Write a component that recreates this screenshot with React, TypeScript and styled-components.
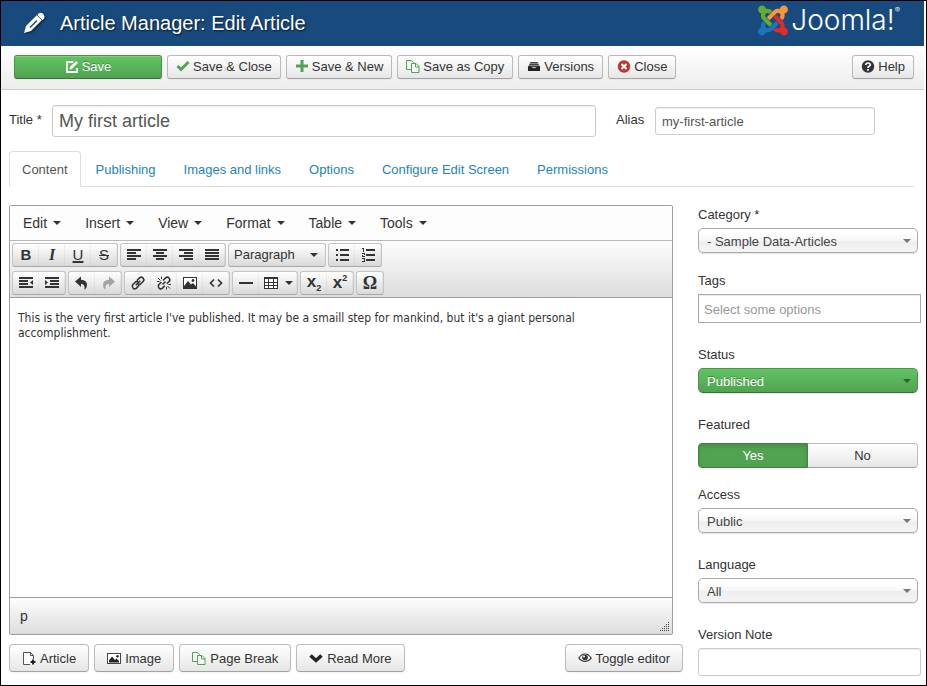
import React, { useState } from "react";
import styled, { createGlobalStyle, css } from "styled-components";

const Global = createGlobalStyle`
  *, *::before, *::after { box-sizing: border-box; }
  body { margin: 0; background: #fff; }
  body, button, input, select {
    font-family: "Liberation Sans", Arial, sans-serif;
    font-size: 13px;
    line-height: 18px;
    color: #333;
  }
`;

const GREEN = "#51a351";

const Page = styled.div`
  min-height: 100vh;
  border: 1px solid #000;
  padding-right: 2px;
  display: flex;
  flex-direction: column;
`;

const Header = styled.header`
  display: flex;
  align-items: center;
  height: 45px;
  padding: 0 24px 2px 22px;
  background: #184a7d;
  color: #fff;
`;

const PageTitle = styled.h1`
  flex: 1;
  margin: 0 0 0 15px;
  font-size: 20px;
  line-height: 24px;
  font-weight: 400;
  text-shadow: 1px 1px 2px rgba(0, 0, 0, 0.7);
`;

const HeaderIcon = styled.svg`
  width: 22px;
  height: 22px;
  filter: drop-shadow(1px 1px 1px rgba(0, 0, 0, 0.6));
`;

const Logo = styled.a`
  display: flex;
  align-items: center;
  gap: 3px;
  padding-bottom: 5px;
  color: #fff;
  text-decoration: none;
`;

const LogoWord = styled.span`
  display: flex;
  align-items: flex-start;
  font-family: Inter, "Liberation Sans", sans-serif;
  font-size: 28px;
  font-weight: 300;
  line-height: 30px;
`;

const Registered = styled.sup`
  font-size: 8px;
  line-height: 10px;
`;

const ActionBar = styled.div`
  display: flex;
  gap: 5px;
  padding: 9px 10px 10px 13px;
  border-bottom: 1px solid #ccc;
  background: linear-gradient(#fff, #ededed);
`;

const Spacer = styled.span`
  flex: 1;
`;

const Button = styled.button<{ $primary?: boolean; $tall?: boolean }>`
  display: inline-flex;
  align-items: center;
  justify-content: center;
  gap: ${(p) => (p.$tall ? 4 : 3)}px;
  height: ${(p) => (p.$tall ? 28 : 24)}px;
  padding: ${(p) => (p.$tall ? "2px 12px 0" : "0 8px")};
  border: 1px solid #bbb;
  border-bottom-color: #a2a2a2;
  border-radius: ${(p) => (p.$tall ? 4 : 3)}px;
  background: linear-gradient(#fff, #e6e6e6);
  box-shadow: inset 0 1px 0 rgba(255, 255, 255, 0.2), 0 1px 2px rgba(0, 0, 0, 0.05);
  white-space: nowrap;
  cursor: pointer;
  ${(p) =>
    p.$primary &&
    css`
      min-width: 148px;
      border-color: #499249 #499249 #387038;
      background: linear-gradient(#62c462, #51a351);
      color: #fff;
      text-shadow: 0 -1px 0 rgba(0, 0, 0, 0.25);
    `}
`;

const Glyph = styled.svg`
  flex: none;
  width: 14px;
  height: 14px;
`;

const TitleRow = styled.div`
  display: flex;
  align-items: center;
  padding: 15px 49px 0 8px;
`;

const FieldLabel = styled.label<{ $width?: number }>`
  display: block;
  min-width: ${(p) => (p.$width ? `${p.$width}px` : "0")};
  padding-bottom: ${(p) => (p.$width ? 3 : 0)}px;
  line-height: 20px;
`;

const TextInput = styled.input<{ $large?: boolean; $square?: boolean }>`
  display: block;
  width: 100%;
  height: ${(p) => (p.$large ? 32 : p.$square ? 29 : 28)}px;
  padding: ${(p) => (p.$square ? "2px 5px 0" : "0 6px")};
  border: 1px solid ${(p) => (p.$square ? "#aaa" : "#ccc")};
  border-radius: ${(p) => (p.$square ? 0 : 3)}px;
  background: #fff;
  box-shadow: inset 0 1px 1px rgba(0, 0, 0, 0.075);
  color: #555;
  font-size: ${(p) => (p.$large ? 18 : 13)}px;
  &::placeholder { color: #999; opacity: 1; }
`;

const TitleBox = styled.div`
  flex: 1;
  margin-right: 20px;
`;

const AliasBox = styled.div`
  flex: 0 0 220px;
`;

const Tabs = styled.nav`
  display: flex;
  gap: 2px;
  margin: 14px 10px 0 8px;
  border-bottom: 1px solid #ddd;
`;

const Tab = styled.a<{ $active?: boolean }>`
  height: 36px;
  margin-bottom: -1px;
  padding: 9px 12px 0;
  border: 1px solid transparent;
  border-radius: 4px 4px 0 0;
  color: #2384bd;
  text-decoration: none;
  ${(p) =>
    p.$active &&
    css`
      border-color: #ddd #ddd #fff;
      background: #fff;
      color: #555;
    `}
`;

const Columns = styled.div`
  display: grid;
  grid-template-columns: minmax(0, 1fr) 223px;
  gap: 15px;
  padding: 18px 3px 9px 8px;
`;

const Main = styled.main`
  display: flex;
  flex-direction: column;
  gap: 9px;
`;

const Editor = styled.section`
  display: flex;
  flex-direction: column;
  margin-right: 10px;
  border: 1px solid #9e9e9e;
  border-radius: 2px;
`;

const MenuBar = styled.div`
  display: flex;
  height: 35px;
  padding-left: 1px;
  border-bottom: 1px solid #b9b9b9;
  background: #fdfdfd;
`;

const MenuButton = styled.button`
  display: flex;
  align-items: center;
  gap: 6px;
  padding: 0 12px;
  border: 0;
  background: none;
  font-size: 14px;
`;

const Caret = styled.span<{ $color?: string }>`
  flex: none;
  border: 4px solid transparent;
  border-top-color: ${(p) => p.$color || "#333"};
  border-bottom: 0;
`;

const Tools = styled.div`
  display: flex;
  flex-direction: column;
  gap: 4px;
  padding: 2px;
  border-bottom: 1px solid #9e9e9e;
  background: linear-gradient(#fdfdfd, #ddd);
`;

const ToolRow = styled.div`
  display: flex;
  gap: 2px;
`;

const ToolGroup = styled.div`
  display: flex;
  height: 24px;
  border: 1px solid #c4c4c4;
  border-bottom-color: #a8a8a8;
  border-radius: 3px;
  background: linear-gradient(#fff, #d9d9d9);
  overflow: hidden;
`;

const ToolButton = styled.button<{ $wide?: boolean }>`
  display: flex;
  align-items: center;
  justify-content: center;
  gap: 6px;
  width: ${(p) => (p.$wide ? 38 : 26)}px;
  padding: 0;
  border: 0;
  background: none;
  box-shadow: inset -1px 0 0 rgba(0, 0, 0, 0.04);
`;

const ToolGlyph = styled.svg`
  flex: none;
  width: 16px;
  height: 16px;
`;

type LetterKind = "b" | "i" | "u" | "s" | "x" | "o";

const letterStyles: Record<LetterKind, ReturnType<typeof css>> = {
  b: css`font-weight: 700;`,
  i: css`font: italic 700 16px/18px "Liberation Serif", serif;`,
  u: css`text-decoration: underline; text-decoration-thickness: 2px; text-underline-offset: 1px;`,
  s: css`padding: 0 1px; text-decoration: line-through;`,
  x: css`font-size: 17px; font-weight: 700;`,
  o: css`font: 700 18px/18px "Liberation Serif", serif;`,
};

const Letter = styled.span<{ $kind: LetterKind }>`
  font-size: 15px;
  line-height: 18px;
  ${(p) => letterStyles[p.$kind]}
  sub, sup { font-size: 9px; line-height: 8px; }
`;

const Overlay = styled.div<{ $width?: number }>`
  display: grid;
  align-items: center;
  width: ${(p) => (p.$width ? `${p.$width}px` : "auto")};
  margin-right: ${(p) => (p.$width ? 0 : 3)}px;
  & > * { grid-area: 1 / 1; }
  & > span { justify-self: end; margin-right: 7px; pointer-events: none; }
`;

const FormatSelect = styled.select`
  width: 100%;
  height: 22px;
  padding: 0 5px;
  border: 0;
  appearance: none;
  background: none;
`;

const Canvas = styled.div`
  min-height: 299px;
  padding: 13px 8px;
  outline: 0;
  font-family: "DejaVu Sans Condensed", "DejaVu Sans", sans-serif;
  font-size: 12px;
  line-height: 15px;
`;

const Paragraph = styled.p`
  margin: 0;
`;

const StatusBar = styled.div`
  display: flex;
  align-items: center;
  justify-content: space-between;
  height: 37px;
  padding: 0 2px 0 10px;
  border-top: 1px solid #9e9e9e;
  background: linear-gradient(#fdfdfd, #ddd);
  font-size: 14px;
`;

const Grip = styled.svg`
  align-self: flex-end;
  width: 10px;
  height: 10px;
  margin-bottom: 2px;
`;

const ButtonRow = styled.div`
  display: flex;
  gap: 5px;
`;

const Side = styled.aside`
  display: flex;
  flex-direction: column;
`;

const Field = styled.div<{ $after: number; $gap?: number }>`
  display: flex;
  flex-direction: column;
  gap: ${(p) => p.$gap || 3}px;
  margin-bottom: ${(p) => p.$after}px;
`;

const Select = styled.select<{ $green?: boolean }>`
  width: 100%;
  height: 25px;
  padding: 2px 8px 0;
  border: 1px solid #aaa;
  border-radius: 5px;
  appearance: none;
  background: linear-gradient(#fff 20%, #f6f6f6 50%, #eee 52%, #f4f4f4 100%);
  box-shadow: 0 1px 1px rgba(0, 0, 0, 0.1);
  color: #444;
  ${(p) =>
    p.$green &&
    css`
      border-color: #499249 #499249 #387038;
      background: linear-gradient(#62c462, #51a351);
      color: #fff;
      text-shadow: 0 -1px 0 rgba(0, 0, 0, 0.25);
    `}
`;

const Toggle = styled.div`
  display: grid;
  grid-template-columns: 1fr 1fr;
  margin-right: 3px;
`;

const ToggleOption = styled.label<{ $on: boolean; $last?: boolean }>`
  display: flex;
  align-items: center;
  justify-content: center;
  height: 25px;
  border: 1px solid #bbb;
  border-bottom-color: #a2a2a2;
  border-left-width: ${(p) => (p.$last ? 0 : 1)}px;
  border-radius: ${(p) => (p.$last ? "0 4px 4px 0" : "4px 0 0 4px")};
  background: linear-gradient(#fff, #e6e6e6);
  ${(p) =>
    p.$on &&
    css`
      border-color: #3f853f;
      background: ${GREEN};
      box-shadow: inset 0 2px 4px rgba(0, 0, 0, 0.15);
      color: #fff;
    `}
`;

const HiddenRadio = styled.input`
  appearance: none;
  width: 0;
  height: 0;
  margin: 0;
`;

const JoomlaMark = () => (
  <svg width="30" height="31" viewBox="0 24 448 464" aria-hidden="true">
    <path fill="#63ab35" d="M.6 92.1C.6 58.8 27.4 32 60.4 32c30 0 54.5 21.9 59.2 50.2 32.6-7.6 67.1.6 96.5 30l-44.3 44.3c-20.5-20.5-42.6-16.3-55.4-3.5-14.3 14.3-14.3 37.9 0 52.2l99.5 99.5-44 44.3c-87.7-87.2-49.7-49.7-99.8-99.7-26.8-26.5-35-64.8-24.8-98.9C20.4 144.6.6 120.7.6 92.1z" />
    <path fill="#f8963b" d="M130.1 208.5l44.3 44.3c10-10 89.7-89.7 99.7-99.8 14.3-14.3 37.6-14.3 51.9 0 12.8 12.8 17 35-3.5 55.4l44 44.3c31.2-31.2 38.5-67.6 28.9-101.2 29.2-4.1 51.9-29.2 51.9-59.5 0-33.2-26.8-60.1-59.8-60.1-30.3 0-55.4 22.5-59.5 51.6-33.8-9.9-71.7-1.5-98.3 25.1-18.3 19.1-71.1 71.5-99.6 99.9z" />
    <path fill="#e02a2b" d="M396.4 360.7c8.2-32.7-.9-68.5-26.3-93.9-11.8-12.2 5 4.7-99.5-99.7l-44.3 44.3 99.7 99.7c14.3 14.3 14.3 37.6 0 51.9-12.8 12.8-35 17-55.4-3.5l-44 44.3c27.6 30.2 68 38.8 102.7 28 5.5 27.4 29.7 48.1 58.9 48.1 33 0 59.8-26.8 59.8-60.1 0-30.2-22.5-55-51.6-59.1z" />
    <path fill="#1d75b9" d="M312.1 307.6l-44-44.3c-87 86.4-50.4 50.4-99.7 99.8-14.3 14.3-37.6 14.3-51.9 0-13.1-13.4-16.9-35.3 3.2-55.4l-44-44.3c-30.2 30.2-38 65.2-29.5 98.3-26.7 6-46.2 29.9-46.2 58.2C0 453.2 26.8 480 59.8 480c28.6 0 52.5-19.8 58.6-46.7 32.7 8.2 68.5-.6 94.2-26 32.1-32.2 12.2-12.2 99.5-99.7z" />
  </svg>
);

const PagesGlyph = () => (
  <Glyph viewBox="0 0 14 14" fill="#f7fbf7" stroke={GREEN}>
    <path d="M0.500 0.500h5l2 2v7h-7z" />
    <path d="M5.500 3.500h4.500l3 3v6h-7.500z" />
    <path d="M9.500 3.500v3.500h3.500" fill="none" />
  </Glyph>
);

const ImageGlyph = () => (
  <Glyph viewBox="0 0 14 14">
    <rect x="0.500" y="1.500" width="13" height="10" fill="#fff" stroke="#444" />
    <path fill="#222" d="M2 10.500V8.500l3-4 3 3.500 1.500-1.500 2.500 2.500v1.500z" />
    <circle cx="10.500" cy="4.200" r="1.200" fill="#222" />
  </Glyph>
);

const lines = (rows: [number, number][]) => (
  <ToolGlyph viewBox="0 0 16 16" shapeRendering="crispEdges">
    {rows.map(([x, w], i) => (
      <rect key={i} x={x} y={2 + i * 3} width={w} height={2} fill="#333" />
    ))}
  </ToolGlyph>
);

const indent = (arrow: string) => (
  <ToolGlyph viewBox="0 0 16 16" fill="#333">
    <path d={`M1 2h14v2H1zM1 11h14v2H1z${arrow}`} />
  </ToolGlyph>
);

const menus = ["Edit", "Insert", "View", "Format", "Table", "Tools"];
const tabs = ["Content", "Publishing", "Images and links", "Options", "Configure Edit Screen", "Permissions"];

type PickerProps = { id: string; label: string; value: string; green?: boolean; after: number };

const Picker = ({ id, label, value, green, after }: PickerProps) => (
  <Field $after={after}>
    <FieldLabel htmlFor={id}>{label}</FieldLabel>
    <Overlay>
      <Select id={id} $green={green}>
        <option>{value}</option>
      </Select>
      <Caret $color={green ? "#2c602c" : "#777"} />
    </Overlay>
  </Field>
);

export default function App() {
  const [featured, setFeatured] = useState(true);

  return (
    <Page>
      <Global />
      <Header>
        <HeaderIcon viewBox="0 0 22 22">
          <path fill="#fff" d="M1 21l2-7L14 3l5 5L8 19z" />
          <path fill="#fff" d="M15 2q2.500-2.500 5-.3t1 5l-1.500 1.500-5-5z" />
          <path stroke="#184a7d" strokeWidth="1.400" d="M7 15.500l7-7" />
          <path stroke="#184a7d" strokeWidth="0.700" d="M14 3l5 5" />
        </HeaderIcon>
        <PageTitle>Article Manager: Edit Article</PageTitle>
        <Logo href="#" aria-label="Joomla!">
          <JoomlaMark />
          <LogoWord>
            Joomla!<Registered>®</Registered>
          </LogoWord>
        </Logo>
      </Header>

      <ActionBar>
        <Button $primary>
          <Glyph viewBox="0 0 14 14" fill="none" stroke="#fff" strokeWidth="1.800">
            <path d="M8 2H2v10h10V8" />
            <path d="M4.500 9.500l.5-2.700L11.200 1l1.800 1.800L7 9z" fill="#fff" stroke="none" />
          </Glyph>
          Save
        </Button>
        <Button>
          <Glyph viewBox="0 0 14 14" fill="none" stroke={GREEN} strokeWidth="2.800">
            <path d="M1.500 6L5 9.500l7.500-7.500" />
          </Glyph>
          Save &amp; Close
        </Button>
        <Button>
          <Glyph viewBox="0 0 14 14" fill={GREEN}>
            <path d="M5.500 0h3v4.500H13v3H8.500V12h-3V7.500H1v-3h4.500z" />
          </Glyph>
          Save &amp; New
        </Button>
        <Button>
          <PagesGlyph />
          Save as Copy
        </Button>
        <Button>
          <Glyph viewBox="0 0 14 14">
            <path fill="#888" d="M3.500 2h7L13.500 7.500H.5z" />
            <path stroke="#444" d="M3.500 2.500h7M2.500 4.500h9M1.500 6.500h11" />
            <path fill="#222" d="M1 6.500h3q.8 1.800 3 1.800t3-1.800h3V11H1z" />
          </Glyph>
          Versions
        </Button>
        <Button>
          <Glyph viewBox="0 0 14 14">
            <circle cx="7" cy="6.500" r="6.200" fill="#bd362f" />
            <path stroke="#fff" strokeWidth="2" d="M4.500 4l5 5M9.500 4l-5 5" />
          </Glyph>
          Close
        </Button>
        <Spacer />
        <Button>
          <Glyph viewBox="0 0 14 14">
            <circle cx="7" cy="6.500" r="6.200" fill="#333" />
            <path fill="none" stroke="#fff" strokeWidth="1.700" d="M4.700 5q.2-2 2.300-2t2.300 1.800q0 1-1.200 1.500T7 8M7 9v1.700" />
          </Glyph>
          Help
        </Button>
      </ActionBar>

      <TitleRow>
        <FieldLabel htmlFor="title" $width={43}>Title *</FieldLabel>
        <TitleBox>
          <TextInput id="title" $large defaultValue="My first article" />
        </TitleBox>
        <FieldLabel htmlFor="alias" $width={39}>Alias</FieldLabel>
        <AliasBox>
          <TextInput id="alias" defaultValue="my-first-article" />
        </AliasBox>
      </TitleRow>

      <Tabs>
        {tabs.map((t, i) => (
          <Tab key={t} href="#" $active={i === 0}>{t}</Tab>
        ))}
      </Tabs>

      <Columns>
        <Main>
          <Editor>
            <MenuBar>
              {menus.map((m) => (
                <MenuButton key={m}>
                  {m}
                  <Caret />
                </MenuButton>
              ))}
            </MenuBar>
            <Tools>
              <ToolRow>
                <ToolGroup>
                  <ToolButton aria-label="Bold"><Letter $kind="b">B</Letter></ToolButton>
                  <ToolButton aria-label="Italic"><Letter $kind="i">I</Letter></ToolButton>
                  <ToolButton aria-label="Underline"><Letter $kind="u">U</Letter></ToolButton>
                  <ToolButton aria-label="Strikethrough"><Letter $kind="s">S</Letter></ToolButton>
                </ToolGroup>
                <ToolGroup>
                  <ToolButton aria-label="Align left">{lines([[1, 14], [1, 9], [1, 14], [1, 9]])}</ToolButton>
                  <ToolButton aria-label="Align center">{lines([[1, 14], [4, 8], [1, 14], [4, 8]])}</ToolButton>
                  <ToolButton aria-label="Align right">{lines([[1, 14], [6, 9], [1, 14], [6, 9]])}</ToolButton>
                  <ToolButton aria-label="Justify">{lines([[1, 14], [1, 14], [1, 14], [1, 14]])}</ToolButton>
                </ToolGroup>
                <ToolGroup>
                  <Overlay $width={96}>
                    <FormatSelect aria-label="Format">
                      <option>Paragraph</option>
                    </FormatSelect>
                    <Caret />
                  </Overlay>
                </ToolGroup>
                <ToolGroup>
                  <ToolButton aria-label="Bullet list">
                    <ToolGlyph viewBox="0 0 16 16" fill="#333" shapeRendering="crispEdges">
                      <path d="M6 2h9v2H6zM6 7h9v2H6zM6 12h9v2H6zM2 2h2v2H2zM2 7h2v2H2zM2 12h2v2H2z" />
                    </ToolGlyph>
                  </ToolButton>
                  <ToolButton aria-label="Numbered list">
                    <ToolGlyph viewBox="0 0 16 16" fill="#333" shapeRendering="crispEdges">
                      <path d="M6 2h9v2H6zM6 7h9v2H6zM6 12h9v2H6z" />
                      <path d="M2 1h2v4H3V2H2zM2 6h3v2H3v1h2v1H2V8h2V7H2zM2 11h3v4H2v-1h2v-1H2v0h2v-1H2z" />
                    </ToolGlyph>
                  </ToolButton>
                </ToolGroup>
              </ToolRow>
              <ToolRow>
                <ToolGroup>
                  <ToolButton aria-label="Decrease indent">{indent("M1 5h9v2H1zM1 8h9v2H1zM15 5v5l-3-2.500z")}</ToolButton>
                  <ToolButton aria-label="Increase indent">{indent("M6 5h9v2H6zM6 8h9v2H6zM1 5v5l3-2.500z")}</ToolButton>
                </ToolGroup>
                <ToolGroup>
                  <ToolButton aria-label="Undo">
                    <ToolGlyph viewBox="0 0 16 16" fill="#333">
                      <path d="M1 6.500L7 1.500v3.200q6 .3 6 5.300 0 3-2.500 5 .8-6-3.500-6.200V12z" />
                    </ToolGlyph>
                  </ToolButton>
                  <ToolButton aria-label="Redo" disabled>
                    <ToolGlyph viewBox="0 0 16 16" fill="#a3a3a3">
                      <path d="M15 6.500L9 1.500v3.200q-6 .3-6 5.300 0 3 2.500 5-.8-6 3.500-6.200V12z" />
                    </ToolGlyph>
                  </ToolButton>
                </ToolGroup>
                <ToolGroup>
                  <ToolButton aria-label="Insert link">
                    <ToolGlyph viewBox="0 0 16 16" fill="none" stroke="#333" strokeWidth="1.600">
                      <path d="M7 5.500l2.800-2.800q1.700-1.300 3.200.3t.3 3.200L10.500 9q-1.300 1-2.500.3M9 10.500l-2.800 2.800q-1.700 1.300-3.200-.3t-.3-3.200L5.500 7Q6.800 6 8 6.700M5.800 10.200l4.400-4.400" />
                    </ToolGlyph>
                  </ToolButton>
                  <ToolButton aria-label="Remove link">
                    <ToolGlyph viewBox="0 0 16 16" fill="none" stroke="#333" strokeWidth="1.600">
                      <path d="M7 5.500l2.800-2.800q1.700-1.300 3.200.3t.3 3.200L10.800 8.700M8.700 10.800l-2.500 2.500q-1.700 1.300-3.200-.3t-.3-3.200L5.500 7M6.500 9.500l3-3" />
                      <path strokeWidth="1" d="M2 3l2.500 2.500M5.500 1.500V4M1 6.500h2.500M14 13.500l-2.500-2.500M10.500 12v2.500M12.500 9.500H15" />
                    </ToolGlyph>
                  </ToolButton>
                  <ToolButton aria-label="Insert image">
                    <ToolGlyph viewBox="0 0 16 16">
                      <rect x="1.500" y="2.500" width="13" height="11" fill="#fff" stroke="#333" />
                      <path fill="#333" d="M2 13v-2l4-5 3 3.500 2-1.500 3 3.500V13z" />
                      <circle cx="11" cy="5.500" r="1.400" fill="#333" />
                    </ToolGlyph>
                  </ToolButton>
                  <ToolButton aria-label="Source code">
                    <ToolGlyph viewBox="0 0 16 16" fill="none" stroke="#333" strokeWidth="1.700">
                      <path d="M6 4.500L2.500 8 6 11.500M10 4.500L13.500 8 10 11.500" />
                    </ToolGlyph>
                  </ToolButton>
                </ToolGroup>
                <ToolGroup>
                  <ToolButton aria-label="Horizontal line">
                    <ToolGlyph viewBox="0 0 16 16" fill="#333"><path d="M1 7h14v2H1z" /></ToolGlyph>
                  </ToolButton>
                  <ToolButton aria-label="Table" $wide>
                    <ToolGlyph viewBox="0 0 16 16" fill="#333" shapeRendering="crispEdges">
                      <path fill="#fff" d="M1 2h14v12H1z" />
                      <path d="M1 2h14v2H1zM1 7h14v1H1zM1 10h14v1H1zM1 13h14v1H1zM1 2h1v12H1zM5 2h1v12H5zM10 2h1v12h-1zM14 2h1v12h-1z" />
                    </ToolGlyph>
                    <Caret />
                  </ToolButton>
                </ToolGroup>
                <ToolGroup>
                  <ToolButton aria-label="Subscript"><Letter $kind="x">x<sub>2</sub></Letter></ToolButton>
                  <ToolButton aria-label="Superscript"><Letter $kind="x">x<sup>2</sup></Letter></ToolButton>
                </ToolGroup>
                <ToolGroup>
                  <ToolButton aria-label="Special character"><Letter $kind="o">Ω</Letter></ToolButton>
                </ToolGroup>
              </ToolRow>
            </Tools>
            <Canvas role="textbox" aria-label="Article text" contentEditable suppressContentEditableWarning spellCheck={false}>
              <Paragraph>
                This is the very first article I've published. It may be a smaill step for mankind, but it's a giant personal accomplishment.
              </Paragraph>
            </Canvas>
            <StatusBar>
              p
              <Grip viewBox="0 0 10 10" fill="#444" shapeRendering="crispEdges">
                <path d="M8 0h1v1H8zM6 2h1v1H6zM8 2h1v1H8zM4 4h1v1H4zM6 4h1v1H6zM8 4h1v1H8zM2 6h1v1H2zM4 6h1v1H4zM6 6h1v1H6zM8 6h1v1H8zM0 8h1v1H0zM2 8h1v1H2zM4 8h1v1H4zM6 8h1v1H6zM8 8h1v1H8z" />
              </Grip>
            </StatusBar>
          </Editor>
          <ButtonRow>
            <Button $tall>
              <Glyph viewBox="0 0 14 14">
                <path fill="#fff" stroke="#555" d="M8 12.500H1.500V.5h7l3 3V7M8.500 .5v3h3" />
                <path stroke="#222" strokeWidth="2" d="M11 7.500v5M8.500 10h5" />
              </Glyph>
              Article
            </Button>
            <Button $tall><ImageGlyph />Image</Button>
            <Button $tall><PagesGlyph />Page Break</Button>
            <Button $tall>
              <Glyph viewBox="0 0 14 14" fill="none" stroke="#222" strokeWidth="3.500">
                <path d="M1.500 3.500L7 8.500l5.500-5" />
              </Glyph>
              Read More
            </Button>
            <Spacer />
            <Button $tall>
              <Glyph viewBox="0 0 14 14">
                <path fill="none" stroke="#333" strokeWidth="1.200" d="M.8 6Q3.500 2 7 2t6.200 4Q10.500 9.500 7 9.500T.8 6z" />
                <circle cx="7" cy="5.500" r="2.800" fill="#333" />
                <circle cx="6" cy="4.500" r="1" fill="#fff" />
              </Glyph>
              Toggle editor
            </Button>
          </ButtonRow>
        </Main>

        <Side>
          <Picker id="category" label="Category *" value="- Sample Data-Articles" after={18} />
          <Field $after={22}>
            <FieldLabel htmlFor="tags">Tags</FieldLabel>
            <TextInput id="tags" $square placeholder="Select some options" />
          </Field>
          <Picker id="status" label="Status" value="Published" green after={22} />
          <Field $after={17} $gap={8}>
            <FieldLabel as="span" id="featured">Featured</FieldLabel>
            <Toggle role="radiogroup" aria-labelledby="featured">
              <ToggleOption $on={featured}>
                <HiddenRadio type="radio" name="featured" checked={featured} onChange={() => setFeatured(true)} />
                Yes
              </ToggleOption>
              <ToggleOption $on={!featured} $last>
                <HiddenRadio type="radio" name="featured" checked={!featured} onChange={() => setFeatured(false)} />
                No
              </ToggleOption>
            </Toggle>
          </Field>
          <Picker id="access" label="Access" value="Public" after={22} />
          <Picker id="language" label="Language" value="All" after={22} />
          <Field $after={0}>
            <FieldLabel htmlFor="note">Version Note</FieldLabel>
            <TextInput id="note" />
          </Field>
        </Side>
      </Columns>
    </Page>
  );
}
